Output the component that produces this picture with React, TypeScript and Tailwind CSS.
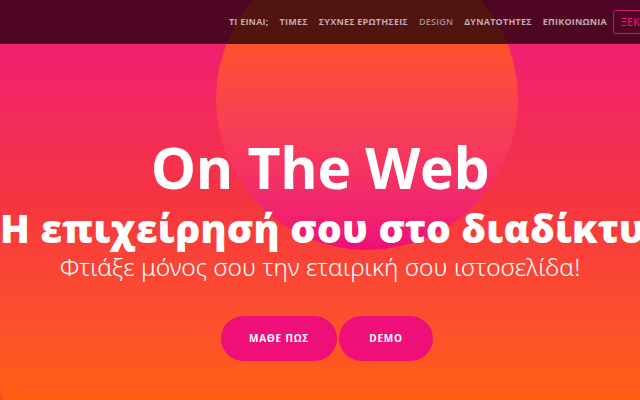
import React from "react";

const navItems = [
  { label: "ΤΙ ΕΙΝΑΙ;", cls: "text-[#c4a9b1] font-bold" },
  { label: "ΤΙΜΕΣ", cls: "text-[#c4a9b1] font-bold" },
  { label: "ΣΥΧΝΕΣ ΕΡΩΤΗΣΕΙΣ", cls: "text-[#c4a9b1] font-bold" },
  { label: "DESIGN", cls: "text-[#a88d95] font-semibold" },
  { label: "ΔΥΝΑΤΟΤΗΤΕΣ", cls: "text-[#c4a9b1] font-bold" },
  { label: "ΕΠΙΚΟΙΝΩΝΙΑ", cls: "text-[#c4a9b1] font-bold" },
];

export default function App() {
  return (
    <div
      className="relative w-full h-[400px] overflow-hidden bg-gradient-to-b from-[#f0127c] via-[#f6343f] to-[#ff5f12]"
      style={{ fontFamily: '"Open Sans", "Noto Sans", sans-serif' }}
    >
      {/* decorative circles */}
      <div className="absolute left-[216px] top-[-52px] w-[302px] h-[302px] rounded-full bg-gradient-to-b from-[#ff5322] from-[28%] to-[#ee0c78]" />
      <div className="absolute left-[-275px] top-[325px] w-[300px] h-[300px] rounded-full bg-[#fd4c20]" />

      {/* header */}
      <header className="absolute top-0 left-0 right-0 h-[44px] bg-[#1c0008]/[0.76] flex items-center justify-end z-10">
        <nav className="flex items-center gap-[11px] mr-[-53px]">
          {navItems.map((n) => (
            <a
              key={n.label}
              className={`text-[9px] tracking-[0.025em] whitespace-nowrap ${n.cls}`}
            >
              {n.label}
            </a>
          ))}
          <a className="ml-[-5px] w-[80px] h-[24px] px-[7px] flex items-center border border-[#d0106a] rounded-[3px] text-[#e8127a] text-[10px] font-semibold tracking-[0.05em] whitespace-nowrap overflow-hidden">
            ΞΕΚΙΝΗΣΤΕ
          </a>
        </nav>
      </header>

      {/* hero */}
      <main className="relative flex flex-col items-stretch pt-[131px] text-white">
        <h1 className="text-center text-[57px] font-bold leading-[72px] tracking-[-0.005em]">
          On The Web
        </h1>
        <h2 className="text-center whitespace-nowrap text-[39px] font-extrabold leading-[46px] mt-[2px] tracking-[0.005em]">
          Η επιχείρησή σου στο διαδίκτυο
        </h2>
        <p
          className="text-center whitespace-nowrap text-[24.5px] font-light leading-[32px]"
          style={{ fontFamily: '"Noto Sans", "Open Sans", sans-serif' }}
        >
          Φτιάξε μόνος σου την εταιρική σου ιστοσελίδα!
        </p>
        <div className="flex justify-center gap-[2px] mt-[33px] pl-[14px]">
          <a className="w-[116px] h-[45px] rounded-full bg-[#ee0f78] flex items-center justify-center text-[10px] font-bold tracking-[0.08em]">
            ΜΑΘΕ ΠΩΣ
          </a>
          <a className="w-[94px] h-[45px] rounded-full bg-[#ee0f78] flex items-center justify-center text-[10px] font-bold tracking-[0.08em]">
            DEMO
          </a>
        </div>
      </main>
    </div>
  );
}
